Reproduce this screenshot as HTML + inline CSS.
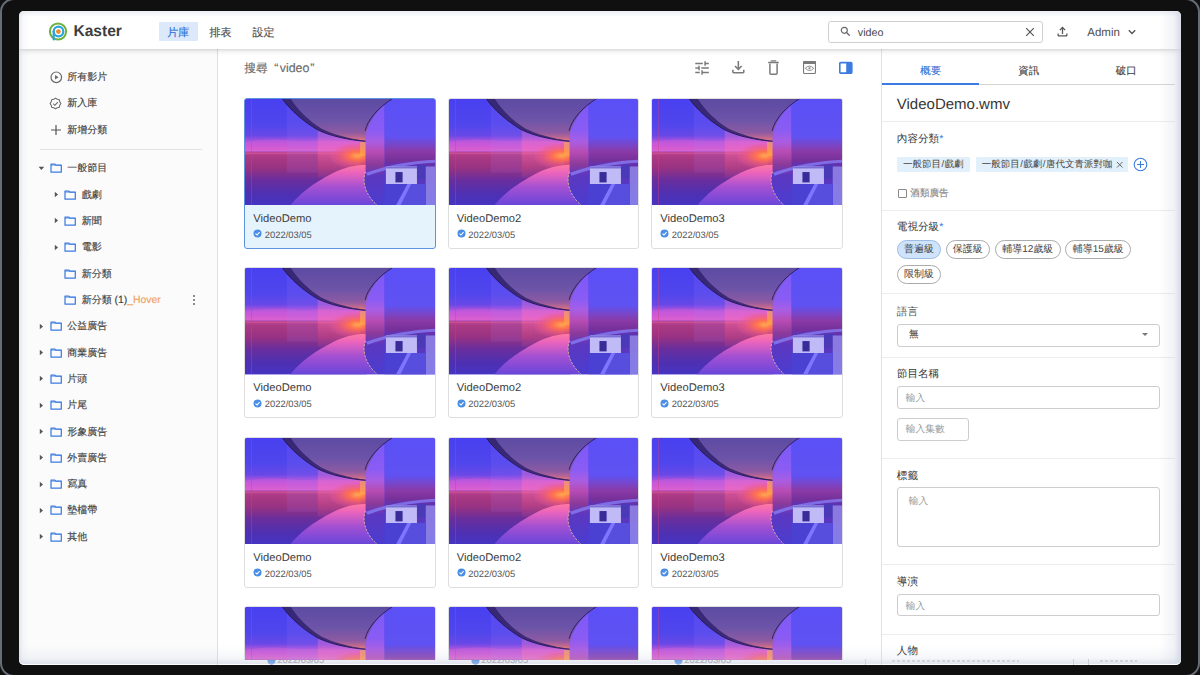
<!DOCTYPE html>
<html><head><meta charset="utf-8">
<style>
*{box-sizing:border-box;margin:0;padding:0}
html,body{width:1200px;height:675px;overflow:hidden;background:#111;font-family:"Liberation Sans",sans-serif;color:#444;text-rendering:geometricPrecision}
#frame{position:absolute;left:0;top:-2px;width:1200px;height:679px;border:2.6px solid #676d78;border-radius:14px;background:#101010}
#screen{position:absolute;left:19.3px;top:11px;width:1162px;height:653.5px;border-radius:5px;overflow:hidden;background:#fff}
#app{position:absolute;left:-19px;top:-11px;width:1200px;height:675px}
.a{position:absolute;white-space:nowrap}
.t{position:absolute;white-space:nowrap;line-height:14px;-webkit-text-stroke-width:0.15px}
#vig{position:absolute;left:0;top:0;width:1162px;height:653px;border-radius:5px;pointer-events:none;
 background:linear-gradient(to right,rgba(200,206,222,.5),rgba(200,206,222,.12) 4px,rgba(200,206,222,0) 10px),linear-gradient(to left,rgba(200,206,222,.75),rgba(200,206,222,.25) 7px,rgba(200,206,222,0) 22px),linear-gradient(to top,rgba(200,206,222,.55),rgba(200,206,222,.18) 6px,rgba(200,206,222,0) 18px),linear-gradient(to bottom,rgba(200,206,222,.35),rgba(200,206,222,0) 6px)}
.card{position:absolute;width:191.3px;height:151px;border:1px solid #dedede;border-radius:3px;background:#fff;overflow:hidden}
.card.sel{border-color:#5d92dc;background:#e5f3fd}
.card svg.th{position:absolute;left:-1px;top:-1px}
.ct{position:absolute;left:8px;top:113px;font-size:11.2px;line-height:14px;color:#3c3c3c}
.cd{position:absolute;left:19.5px;top:130px;font-size:9.4px;line-height:12px;color:#555}
.ck{position:absolute;left:7.8px;top:130.8px}
.lbl{position:absolute;font-size:10.6px;line-height:14px;color:#333;font-weight:500}
.inp{position:absolute;border:1px solid #cdcdcd;border-radius:3px;background:#fff}
.ph{position:absolute;font-size:9.8px;line-height:12px;color:#9a9a9a}
.div{position:absolute;left:882px;width:293px;height:1px;background:#ececec}
.pill{position:absolute;height:19px;border:1px solid #ababab;border-radius:10px;font-size:10px;line-height:17.5px;color:#444;text-align:center}
.chip{position:absolute;height:15.5px;background:#e2f0fc;border-radius:1px;font-size:9.5px;line-height:15.5px;color:#444;padding-left:6px}
</style></head><body>
<div id="frame"></div>
<div id="screen"><div id="app">

<svg width="0" height="0" style="position:absolute">
<defs>
 <linearGradient id="gskyL" x1="0" y1="0" x2="0" y2="1">
  <stop offset="0" stop-color="#4840f0"/><stop offset="0.5" stop-color="#5046ec"/><stop offset="0.7" stop-color="#6848e6"/><stop offset="0.78" stop-color="#9c50e0"/><stop offset="0.88" stop-color="#cc58d8"/><stop offset="1" stop-color="#dc62cc"/>
 </linearGradient>
 <linearGradient id="gcity" x1="0" y1="0" x2="0" y2="1">
  <stop offset="0" stop-color="#c04a94"/><stop offset="0.08" stop-color="#ac3a84"/><stop offset="0.3" stop-color="#983282"/><stop offset="0.52" stop-color="#6a2e9c"/><stop offset="0.78" stop-color="#4e30b2"/><stop offset="1" stop-color="#4634c2"/>
 </linearGradient>
 <linearGradient id="gskyR" x1="0" y1="0" x2="0" y2="1">
  <stop offset="0" stop-color="#5a50f6"/><stop offset="0.36" stop-color="#6052f2"/><stop offset="0.42" stop-color="#7448d0"/><stop offset="0.5" stop-color="#8a3aa6"/><stop offset="0.58" stop-color="#76309a"/><stop offset="0.62" stop-color="#6232b0"/><stop offset="1" stop-color="#4a3ed6"/>
 </linearGradient>
 <linearGradient id="gglass" x1="0" y1="0" x2="0" y2="1">
  <stop offset="0" stop-color="#7a58f8"/><stop offset="0.3" stop-color="#8a5cf4"/><stop offset="0.4" stop-color="#a85ee4"/><stop offset="0.5" stop-color="#b84cb4"/><stop offset="0.62" stop-color="#8a3a9a"/><stop offset="0.72" stop-color="#5c38c0"/><stop offset="1" stop-color="#4a3cd0"/>
 </linearGradient>
 <linearGradient id="gceil" x1="0" y1="0" x2="0" y2="1">
  <stop offset="0" stop-color="#5c4aa2"/><stop offset="0.5" stop-color="#6c54a8"/><stop offset="0.8" stop-color="#8e5aa2"/><stop offset="0.92" stop-color="#c06890"/><stop offset="1" stop-color="#f08070"/>
 </linearGradient>
 <linearGradient id="gfloor" x1="0" y1="0" x2="0" y2="1">
  <stop offset="0" stop-color="#ff7aa0"/><stop offset="0.2" stop-color="#ec64bc"/><stop offset="0.55" stop-color="#a450d2"/><stop offset="1" stop-color="#6846da"/>
 </linearGradient>
 <radialGradient id="gsun" cx="0.5" cy="0.5" r="0.5">
  <stop offset="0" stop-color="#ffa850"/><stop offset="0.3" stop-color="#ff7050"/><stop offset="0.7" stop-color="#f05a80" stop-opacity="0.5"/><stop offset="1" stop-color="#f060a0" stop-opacity="0"/>
 </radialGradient>
 <linearGradient id="gpanel" x1="0" y1="0" x2="0" y2="1">
  <stop offset="0" stop-color="#ff80d0" stop-opacity="0"/><stop offset="0.45" stop-color="#ff80d0" stop-opacity="0.35"/><stop offset="0.7" stop-color="#ff70b0" stop-opacity="0.4"/><stop offset="1" stop-color="#ff6080" stop-opacity="0.1"/>
 </linearGradient>
 <symbol id="thumb" viewBox="0 0 192 108">
  <rect width="192" height="108" fill="#4b3ae8"/>
  <rect x="0" y="0" width="123" height="54" fill="url(#gskyL)"/>
  <rect x="0" y="54" width="123" height="54" fill="url(#gcity)"/>
  <path d="M0 44 C15 42 30 41 45 42.5 C60 44 75 42 90 43 L122 44 L122 47 L0 47 Z" fill="#d860d8" opacity=".35"/>
  <rect x="0" y="55" width="123" height="1.2" fill="#e05aa0" opacity=".5"/>
  <rect x="43" y="0" width="31" height="75" fill="#b080ff" opacity=".12"/>
  <rect x="74" y="0" width="12" height="80" fill="url(#gpanel)"/>
  <rect x="86" y="0" width="31" height="80" fill="url(#gpanel)"/>
  <ellipse cx="114" cy="58" rx="30" ry="14" fill="url(#gsun)"/>
  <rect x="116.5" y="44" width="6" height="14" fill="#ffb048" opacity=".6"/>
  <rect x="141" y="0" width="51" height="108" fill="url(#gskyR)"/>
  <path d="M122 0 H141 V108 H134 C124 98 118 84 122 74 Z" fill="url(#gglass)"/>
  <path d="M38 0 C46 12 60 24 74 32 C86 38 104 42 122 43.5 C121 32 130 12 150 0 Z" fill="url(#gceil)"/>
  <path d="M37.6 0 C46 12 60 24 74 32 C86 38 104 42 122 43.5 L122 43 C104 41 88 36 78 31 C64 22 54 12 46.4 0 Z" fill="#30226e" opacity=".85"/>
  <path d="M38 0 C46 12 60 24 74 32 C86 38 104 42 122 43.5" stroke="#2a1860" stroke-width="1" fill="none"/>
  <path d="M121.6 33 C124 22 134 10 150 0" stroke="#2a1860" stroke-width="0.9" fill="none"/>
  <path d="M46.4 108 C54 98 68 86 90 75 C100 70 110 67.5 122 67 L122 74 C118 84 122 98 134 108 Z" fill="url(#gfloor)"/>
  <path d="M122 74 C118 84 122 98 134 108" stroke="#e8c898" stroke-width="0.9" stroke-dasharray="2.4 1.3" fill="none" opacity=".85"/>
  <path d="M122.5 75 C145 67 170 63 192 62 L192 65 C170 66 146 70 124 78 Z" fill="#8a84ff" opacity=".7"/>
  <rect x="142.4" y="68.8" width="31.2" height="17.6" fill="#c0baf6"/>
  <rect x="142.4" y="68.8" width="31.2" height="2" fill="#7a70d8"/>
  <rect x="152" y="74.4" width="7.2" height="10.4" fill="#3a2c98"/>
  <rect x="173.6" y="67" width="9" height="14" fill="#4a3ab8"/>
  <rect x="182.4" y="68.8" width="9.6" height="39.2" fill="#9a92ee" opacity=".75"/>
  <path d="M141 86.4 L182.4 86.4 L182.4 108 L141 108 Z" fill="#4a40d2"/>
  <path d="M164 86.4 L168 86.4 L157 108 L152.5 108 Z" fill="#7e76ff"/>
  <path d="M168 86.4 L182.4 86.4 L182.4 108 L157 108 Z" fill="#6058e6" opacity=".6"/>
  <rect x="7.2" y="0" width="0.7" height="108" fill="#d04080" opacity=".6"/>
 </symbol>
</defs></svg>

<div class="a" style="left:19px;top:49px;width:199px;height:626px;background:#fbfbfc;border-right:1px solid #e0e0e0"></div>
<div class="a" style="left:881px;top:49px;width:300px;height:626px;background:#fff;border-left:1px solid #e2e2e2"></div>
<svg class="a" style="left:49.4px;top:70.8px" width="13" height="13" viewBox="0 0 13 13"><circle cx="6.3" cy="6.3" r="5.3" fill="none" stroke="#6a6a6a" stroke-width="1.2"/><path d="M5 4.1 L8.6 6.3 L5 8.5 Z" fill="#6a6a6a"/></svg>
<div class="t" style="left:67px;top:71.3px;font-size:10px;color:#3f3f3f">所有影片</div>
<svg class="a" style="left:48.6px;top:97px" width="13" height="13" viewBox="0 0 13 13"><path d="M6.50 1.10 L8.26 2.25 L10.32 2.68 L10.75 4.74 L11.90 6.50 L10.75 8.26 L10.32 10.32 L8.26 10.75 L6.50 11.90 L4.74 10.75 L2.68 10.32 L2.25 8.26 L1.10 6.50 L2.25 4.74 L2.68 2.68 L4.74 2.25 Z" fill="none" stroke="#6a6a6a" stroke-width="1.1" stroke-linejoin="round"/><path d="M4.2 6.7 L5.9 8.3 L8.9 5.1" fill="none" stroke="#6a6a6a" stroke-width="1.1"/></svg>
<div class="t" style="left:67px;top:97.3px;font-size:10px;color:#3f3f3f">新入庫</div>
<svg class="a" style="left:50px;top:124px" width="12" height="12" viewBox="0 0 12 12"><path d="M6 1 V11 M1 6 H11" stroke="#555" stroke-width="1.2"/></svg>
<div class="t" style="left:67px;top:124px;font-size:10px;color:#3f3f3f">新增分類</div>
<div class="a" style="left:40px;top:149px;width:162px;height:1px;background:#e3e3e3"></div>
<svg class="a" style="left:38.2px;top:166.0px" width="7" height="5" viewBox="0 0 7 5"><path d="M0.6 0.8 H6.2 L3.4 4 Z" fill="#555"/></svg>
<svg class="a" style="left:49.5px;top:163.3px" width="13" height="10" viewBox="0 0 13 10"><path d="M1 1 H4.6 L5.8 2 H11.3 V9.2 H1 Z" fill="none" stroke="#3d7ce0" stroke-width="1.25" stroke-linejoin="round"/><path d="M1 2.3 H11.3" stroke="#3d7ce0" stroke-width="0.6"/></svg>
<div class="t" style="left:67px;top:162.3px;font-size:10px;color:#3f3f3f">一般節目</div>
<svg class="a" style="left:53.3px;top:191.12px" width="5" height="7" viewBox="0 0 5 7"><path d="M0.8 0.8 L4 3.5 L0.8 6.2 Z" fill="#555"/></svg>
<svg class="a" style="left:64.0px;top:189.62px" width="13" height="10" viewBox="0 0 13 10"><path d="M1 1 H4.6 L5.8 2 H11.3 V9.2 H1 Z" fill="none" stroke="#3d7ce0" stroke-width="1.25" stroke-linejoin="round"/><path d="M1 2.3 H11.3" stroke="#3d7ce0" stroke-width="0.6"/></svg>
<div class="t" style="left:81.5px;top:188.62px;font-size:10px;color:#3f3f3f">戲劇</div>
<svg class="a" style="left:53.3px;top:217.44px" width="5" height="7" viewBox="0 0 5 7"><path d="M0.8 0.8 L4 3.5 L0.8 6.2 Z" fill="#555"/></svg>
<svg class="a" style="left:64.0px;top:215.94px" width="13" height="10" viewBox="0 0 13 10"><path d="M1 1 H4.6 L5.8 2 H11.3 V9.2 H1 Z" fill="none" stroke="#3d7ce0" stroke-width="1.25" stroke-linejoin="round"/><path d="M1 2.3 H11.3" stroke="#3d7ce0" stroke-width="0.6"/></svg>
<div class="t" style="left:81.5px;top:214.94px;font-size:10px;color:#3f3f3f">新聞</div>
<svg class="a" style="left:53.3px;top:243.76000000000002px" width="5" height="7" viewBox="0 0 5 7"><path d="M0.8 0.8 L4 3.5 L0.8 6.2 Z" fill="#555"/></svg>
<svg class="a" style="left:64.0px;top:242.26000000000002px" width="13" height="10" viewBox="0 0 13 10"><path d="M1 1 H4.6 L5.8 2 H11.3 V9.2 H1 Z" fill="none" stroke="#3d7ce0" stroke-width="1.25" stroke-linejoin="round"/><path d="M1 2.3 H11.3" stroke="#3d7ce0" stroke-width="0.6"/></svg>
<div class="t" style="left:81.5px;top:241.26000000000002px;font-size:10px;color:#3f3f3f">電影</div>
<svg class="a" style="left:64.0px;top:268.58000000000004px" width="13" height="10" viewBox="0 0 13 10"><path d="M1 1 H4.6 L5.8 2 H11.3 V9.2 H1 Z" fill="none" stroke="#3d7ce0" stroke-width="1.25" stroke-linejoin="round"/><path d="M1 2.3 H11.3" stroke="#3d7ce0" stroke-width="0.6"/></svg>
<div class="t" style="left:81.5px;top:267.58000000000004px;font-size:10px;color:#3f3f3f">新分類</div>
<svg class="a" style="left:64.0px;top:294.9px" width="13" height="10" viewBox="0 0 13 10"><path d="M1 1 H4.6 L5.8 2 H11.3 V9.2 H1 Z" fill="none" stroke="#3d7ce0" stroke-width="1.25" stroke-linejoin="round"/><path d="M1 2.3 H11.3" stroke="#3d7ce0" stroke-width="0.6"/></svg>
<div class="t" style="left:81.5px;top:293.9px;font-size:10px;color:#3f3f3f">新分類 <span style="font-size:10.4px">(1)</span><span style="color:#f0a060;font-size:10.4px">_Hover</span></div>
<svg class="a" style="left:38.8px;top:322.72px" width="5" height="7" viewBox="0 0 5 7"><path d="M0.8 0.8 L4 3.5 L0.8 6.2 Z" fill="#555"/></svg>
<svg class="a" style="left:49.5px;top:321.22px" width="13" height="10" viewBox="0 0 13 10"><path d="M1 1 H4.6 L5.8 2 H11.3 V9.2 H1 Z" fill="none" stroke="#3d7ce0" stroke-width="1.25" stroke-linejoin="round"/><path d="M1 2.3 H11.3" stroke="#3d7ce0" stroke-width="0.6"/></svg>
<div class="t" style="left:67px;top:320.22px;font-size:10px;color:#3f3f3f">公益廣告</div>
<svg class="a" style="left:38.8px;top:349.04px" width="5" height="7" viewBox="0 0 5 7"><path d="M0.8 0.8 L4 3.5 L0.8 6.2 Z" fill="#555"/></svg>
<svg class="a" style="left:49.5px;top:347.54px" width="13" height="10" viewBox="0 0 13 10"><path d="M1 1 H4.6 L5.8 2 H11.3 V9.2 H1 Z" fill="none" stroke="#3d7ce0" stroke-width="1.25" stroke-linejoin="round"/><path d="M1 2.3 H11.3" stroke="#3d7ce0" stroke-width="0.6"/></svg>
<div class="t" style="left:67px;top:346.54px;font-size:10px;color:#3f3f3f">商業廣告</div>
<svg class="a" style="left:38.8px;top:375.36px" width="5" height="7" viewBox="0 0 5 7"><path d="M0.8 0.8 L4 3.5 L0.8 6.2 Z" fill="#555"/></svg>
<svg class="a" style="left:49.5px;top:373.86px" width="13" height="10" viewBox="0 0 13 10"><path d="M1 1 H4.6 L5.8 2 H11.3 V9.2 H1 Z" fill="none" stroke="#3d7ce0" stroke-width="1.25" stroke-linejoin="round"/><path d="M1 2.3 H11.3" stroke="#3d7ce0" stroke-width="0.6"/></svg>
<div class="t" style="left:67px;top:372.86px;font-size:10px;color:#3f3f3f">片頭</div>
<svg class="a" style="left:38.8px;top:401.68px" width="5" height="7" viewBox="0 0 5 7"><path d="M0.8 0.8 L4 3.5 L0.8 6.2 Z" fill="#555"/></svg>
<svg class="a" style="left:49.5px;top:400.18px" width="13" height="10" viewBox="0 0 13 10"><path d="M1 1 H4.6 L5.8 2 H11.3 V9.2 H1 Z" fill="none" stroke="#3d7ce0" stroke-width="1.25" stroke-linejoin="round"/><path d="M1 2.3 H11.3" stroke="#3d7ce0" stroke-width="0.6"/></svg>
<div class="t" style="left:67px;top:399.18px;font-size:10px;color:#3f3f3f">片尾</div>
<svg class="a" style="left:38.8px;top:428.0px" width="5" height="7" viewBox="0 0 5 7"><path d="M0.8 0.8 L4 3.5 L0.8 6.2 Z" fill="#555"/></svg>
<svg class="a" style="left:49.5px;top:426.5px" width="13" height="10" viewBox="0 0 13 10"><path d="M1 1 H4.6 L5.8 2 H11.3 V9.2 H1 Z" fill="none" stroke="#3d7ce0" stroke-width="1.25" stroke-linejoin="round"/><path d="M1 2.3 H11.3" stroke="#3d7ce0" stroke-width="0.6"/></svg>
<div class="t" style="left:67px;top:425.5px;font-size:10px;color:#3f3f3f">形象廣告</div>
<svg class="a" style="left:38.8px;top:454.32px" width="5" height="7" viewBox="0 0 5 7"><path d="M0.8 0.8 L4 3.5 L0.8 6.2 Z" fill="#555"/></svg>
<svg class="a" style="left:49.5px;top:452.82px" width="13" height="10" viewBox="0 0 13 10"><path d="M1 1 H4.6 L5.8 2 H11.3 V9.2 H1 Z" fill="none" stroke="#3d7ce0" stroke-width="1.25" stroke-linejoin="round"/><path d="M1 2.3 H11.3" stroke="#3d7ce0" stroke-width="0.6"/></svg>
<div class="t" style="left:67px;top:451.82px;font-size:10px;color:#3f3f3f">外賣廣告</div>
<svg class="a" style="left:38.8px;top:480.64000000000004px" width="5" height="7" viewBox="0 0 5 7"><path d="M0.8 0.8 L4 3.5 L0.8 6.2 Z" fill="#555"/></svg>
<svg class="a" style="left:49.5px;top:479.14000000000004px" width="13" height="10" viewBox="0 0 13 10"><path d="M1 1 H4.6 L5.8 2 H11.3 V9.2 H1 Z" fill="none" stroke="#3d7ce0" stroke-width="1.25" stroke-linejoin="round"/><path d="M1 2.3 H11.3" stroke="#3d7ce0" stroke-width="0.6"/></svg>
<div class="t" style="left:67px;top:478.14000000000004px;font-size:10px;color:#3f3f3f">寫真</div>
<svg class="a" style="left:38.8px;top:506.96000000000004px" width="5" height="7" viewBox="0 0 5 7"><path d="M0.8 0.8 L4 3.5 L0.8 6.2 Z" fill="#555"/></svg>
<svg class="a" style="left:49.5px;top:505.46000000000004px" width="13" height="10" viewBox="0 0 13 10"><path d="M1 1 H4.6 L5.8 2 H11.3 V9.2 H1 Z" fill="none" stroke="#3d7ce0" stroke-width="1.25" stroke-linejoin="round"/><path d="M1 2.3 H11.3" stroke="#3d7ce0" stroke-width="0.6"/></svg>
<div class="t" style="left:67px;top:504.46000000000004px;font-size:10px;color:#3f3f3f">墊檔帶</div>
<svg class="a" style="left:38.8px;top:533.28px" width="5" height="7" viewBox="0 0 5 7"><path d="M0.8 0.8 L4 3.5 L0.8 6.2 Z" fill="#555"/></svg>
<svg class="a" style="left:49.5px;top:531.78px" width="13" height="10" viewBox="0 0 13 10"><path d="M1 1 H4.6 L5.8 2 H11.3 V9.2 H1 Z" fill="none" stroke="#3d7ce0" stroke-width="1.25" stroke-linejoin="round"/><path d="M1 2.3 H11.3" stroke="#3d7ce0" stroke-width="0.6"/></svg>
<div class="t" style="left:67px;top:530.78px;font-size:10px;color:#3f3f3f">其他</div>
<svg class="a" style="left:192px;top:293.9px" width="4" height="12" viewBox="0 0 4 12"><circle cx="2" cy="2" r="1" fill="#666"/><circle cx="2" cy="6" r="1" fill="#666"/><circle cx="2" cy="10" r="1" fill="#666"/></svg>
<div class="t" style="left:244px;top:60px;font-size:12.4px;line-height:16px;color:#6a6a6a"><span style="font-size:11.8px">搜尋</span> <span style="margin-left:3px">“</span><span style="margin-left:1.3px">video</span><span style="margin-left:0.8px">”</span></div>
<svg class="a" style="left:692.9px;top:58.9px" width="18.1" height="18.1" viewBox="0 0 24 24"><path fill="#7a7a7a" d="M3 17v2h6v-2H3zM3 5v2h10V5H3zm10 16v-2h8v-2h-8v-2h-2v6h2zM7 9v2H3v2h4v2h2V9H7zm14 4v-2H11v2h10zm-6-4h2V7h4V5h-4V3h-2v6z"/></svg>
<svg class="a" style="left:728.3px;top:58.3px" width="18.7" height="18.7" viewBox="0 -960 960 960"><path fill="#7a7a7a" d="M480-320 280-520l56-58 104 104v-326h80v326l104-104 56 58-200 200ZM240-160q-33 0-56.5-23.5T160-240v-120h80v120h480v-120h80v120q0 33-23.5 56.5T720-160H240Z"/></svg>
<svg class="a" style="left:766px;top:59px" width="15" height="17" viewBox="0 0 15 17"><path d="M2.2 3.5 H12.8" stroke="#7a7a7a" stroke-width="1.5"/><path d="M5.3 2.6 V1.9 H9.7 V2.6" fill="none" stroke="#7a7a7a" stroke-width="1.1"/><path d="M3.9 4.5 V14.2 Q3.9 15.2 4.9 15.2 H10.1 Q11.1 15.2 11.1 14.2 V4.5" fill="none" stroke="#7a7a7a" stroke-width="1.5"/></svg>
<svg class="a" style="left:802px;top:60px" width="15" height="15" viewBox="0 0 15 15"><rect x="1.55" y="1.55" width="11.9" height="11.9" rx="1" fill="none" stroke="#7a7a7a" stroke-width="1.1"/><rect x="1" y="1" width="13" height="3" rx="1" fill="#7a7a7a"/><path d="M3.3 8.3 Q7.5 3.9 11.7 8.3 Q7.5 12.7 3.3 8.3 Z" fill="none" stroke="#7a7a7a" stroke-width="0.9"/><circle cx="7.5" cy="8.3" r="1" fill="#7a7a7a"/></svg>
<svg class="a" style="left:838px;top:61px" width="15" height="14" viewBox="0 0 15 14"><rect x="1.8" y="1.6" width="12" height="10.5" rx="0.8" fill="none" stroke="#3d7be0" stroke-width="1.6"/><rect x="8.2" y="1" width="5.8" height="11.7" rx="0.6" fill="#3d7be0"/></svg>
<div class="card sel" style="left:244px;top:97.6px"><svg class="th" width="191.3" height="107.5" viewBox="0 0 192 108" preserveAspectRatio="none"><use href="#thumb"/></svg><div class="ct">VideoDemo</div><svg class="ck" width="9" height="9" viewBox="0 0 9 9"><circle cx="4.5" cy="4.5" r="4" fill="#4a8ee6"/><path d="M2.5 4.6 L4 6 L6.6 3.2" fill="none" stroke="#fff" stroke-width="1.1"/></svg><div class="cd">2022/03/05</div></div>
<div class="card" style="left:447.5px;top:97.6px"><svg class="th" width="191.3" height="107.5" viewBox="0 0 192 108" preserveAspectRatio="none"><use href="#thumb"/></svg><div class="ct">VideoDemo2</div><svg class="ck" width="9" height="9" viewBox="0 0 9 9"><circle cx="4.5" cy="4.5" r="4" fill="#4a8ee6"/><path d="M2.5 4.6 L4 6 L6.6 3.2" fill="none" stroke="#fff" stroke-width="1.1"/></svg><div class="cd">2022/03/05</div></div>
<div class="card" style="left:651px;top:97.6px"><svg class="th" width="191.3" height="107.5" viewBox="0 0 192 108" preserveAspectRatio="none"><use href="#thumb"/></svg><div class="ct">VideoDemo3</div><svg class="ck" width="9" height="9" viewBox="0 0 9 9"><circle cx="4.5" cy="4.5" r="4" fill="#4a8ee6"/><path d="M2.5 4.6 L4 6 L6.6 3.2" fill="none" stroke="#fff" stroke-width="1.1"/></svg><div class="cd">2022/03/05</div></div>
<div class="card" style="left:244px;top:267.1px"><svg class="th" width="191.3" height="107.5" viewBox="0 0 192 108" preserveAspectRatio="none"><use href="#thumb"/></svg><div class="ct">VideoDemo</div><svg class="ck" width="9" height="9" viewBox="0 0 9 9"><circle cx="4.5" cy="4.5" r="4" fill="#4a8ee6"/><path d="M2.5 4.6 L4 6 L6.6 3.2" fill="none" stroke="#fff" stroke-width="1.1"/></svg><div class="cd">2022/03/05</div></div>
<div class="card" style="left:447.5px;top:267.1px"><svg class="th" width="191.3" height="107.5" viewBox="0 0 192 108" preserveAspectRatio="none"><use href="#thumb"/></svg><div class="ct">VideoDemo2</div><svg class="ck" width="9" height="9" viewBox="0 0 9 9"><circle cx="4.5" cy="4.5" r="4" fill="#4a8ee6"/><path d="M2.5 4.6 L4 6 L6.6 3.2" fill="none" stroke="#fff" stroke-width="1.1"/></svg><div class="cd">2022/03/05</div></div>
<div class="card" style="left:651px;top:267.1px"><svg class="th" width="191.3" height="107.5" viewBox="0 0 192 108" preserveAspectRatio="none"><use href="#thumb"/></svg><div class="ct">VideoDemo3</div><svg class="ck" width="9" height="9" viewBox="0 0 9 9"><circle cx="4.5" cy="4.5" r="4" fill="#4a8ee6"/><path d="M2.5 4.6 L4 6 L6.6 3.2" fill="none" stroke="#fff" stroke-width="1.1"/></svg><div class="cd">2022/03/05</div></div>
<div class="card" style="left:244px;top:436.6px"><svg class="th" width="191.3" height="107.5" viewBox="0 0 192 108" preserveAspectRatio="none"><use href="#thumb"/></svg><div class="ct">VideoDemo</div><svg class="ck" width="9" height="9" viewBox="0 0 9 9"><circle cx="4.5" cy="4.5" r="4" fill="#4a8ee6"/><path d="M2.5 4.6 L4 6 L6.6 3.2" fill="none" stroke="#fff" stroke-width="1.1"/></svg><div class="cd">2022/03/05</div></div>
<div class="card" style="left:447.5px;top:436.6px"><svg class="th" width="191.3" height="107.5" viewBox="0 0 192 108" preserveAspectRatio="none"><use href="#thumb"/></svg><div class="ct">VideoDemo2</div><svg class="ck" width="9" height="9" viewBox="0 0 9 9"><circle cx="4.5" cy="4.5" r="4" fill="#4a8ee6"/><path d="M2.5 4.6 L4 6 L6.6 3.2" fill="none" stroke="#fff" stroke-width="1.1"/></svg><div class="cd">2022/03/05</div></div>
<div class="card" style="left:651px;top:436.6px"><svg class="th" width="191.3" height="107.5" viewBox="0 0 192 108" preserveAspectRatio="none"><use href="#thumb"/></svg><div class="ct">VideoDemo3</div><svg class="ck" width="9" height="9" viewBox="0 0 9 9"><circle cx="4.5" cy="4.5" r="4" fill="#4a8ee6"/><path d="M2.5 4.6 L4 6 L6.6 3.2" fill="none" stroke="#fff" stroke-width="1.1"/></svg><div class="cd">2022/03/05</div></div>
<div class="card" style="left:244px;top:606.1px"><svg class="th" width="191.3" height="107.5" viewBox="0 0 192 108" preserveAspectRatio="none"><use href="#thumb"/></svg><div class="ct">VideoDemo</div><svg class="ck" width="9" height="9" viewBox="0 0 9 9"><circle cx="4.5" cy="4.5" r="4" fill="#4a8ee6"/><path d="M2.5 4.6 L4 6 L6.6 3.2" fill="none" stroke="#fff" stroke-width="1.1"/></svg><div class="cd">2022/03/05</div></div>
<div class="card" style="left:447.5px;top:606.1px"><svg class="th" width="191.3" height="107.5" viewBox="0 0 192 108" preserveAspectRatio="none"><use href="#thumb"/></svg><div class="ct">VideoDemo2</div><svg class="ck" width="9" height="9" viewBox="0 0 9 9"><circle cx="4.5" cy="4.5" r="4" fill="#4a8ee6"/><path d="M2.5 4.6 L4 6 L6.6 3.2" fill="none" stroke="#fff" stroke-width="1.1"/></svg><div class="cd">2022/03/05</div></div>
<div class="card" style="left:651px;top:606.1px"><svg class="th" width="191.3" height="107.5" viewBox="0 0 192 108" preserveAspectRatio="none"><use href="#thumb"/></svg><div class="ct">VideoDemo3</div><svg class="ck" width="9" height="9" viewBox="0 0 9 9"><circle cx="4.5" cy="4.5" r="4" fill="#4a8ee6"/><path d="M2.5 4.6 L4 6 L6.6 3.2" fill="none" stroke="#fff" stroke-width="1.1"/></svg><div class="cd">2022/03/05</div></div>
<div class="a" style="left:19px;top:11px;width:1162px;height:38.3px;background:#fff;box-shadow:0 1px 6px rgba(0,0,0,.16),0 1px 2px rgba(0,0,0,.06)"></div>
<svg class="a" style="left:48px;top:21px" width="20" height="21" viewBox="0 0 20 21">
    <circle cx="10" cy="10.5" r="8.1" fill="none" stroke="#6fb13f" stroke-width="2"/>
    <circle cx="10.5" cy="10.5" r="4.8" fill="none" stroke="#2ba6dc" stroke-width="2.2"/>
    <path d="M5.7 10.5 L5.7 18.5" stroke="#2ba6dc" stroke-width="2.2" stroke-linecap="round"/>
    <circle cx="10.4" cy="10.6" r="2.4" fill="#f28a2e"/></svg>
<div class="a" style="left:73.1px;top:22.2px;font-size:15.6px;font-weight:bold;color:#3d3d3d;line-height:20px">Kaster</div>
<div class="a" style="left:159px;top:22px;width:39px;height:19px;background:#dce9fb;border-radius:1px"></div>
<div class="t" style="left:167px;top:25.7px;font-size:11px;line-height:15px;color:#2c6fd8">片庫</div>
<div class="t" style="left:209.3px;top:25.7px;font-size:11px;line-height:15px;color:#4a4a4a">排表</div>
<div class="t" style="left:252.3px;top:25.7px;font-size:11px;line-height:15px;color:#4a4a4a">設定</div>
<div class="a" style="left:828px;top:21px;width:215px;height:22px;border:1px solid #cfcfcf;border-radius:3px;background:#fff"></div>
<svg class="a" style="left:840px;top:26px" width="11" height="11" viewBox="0 0 11 11"><circle cx="4.3" cy="4.3" r="3" fill="none" stroke="#666" stroke-width="1.15"/><path d="M6.5 6.5 L9.3 9.3" stroke="#666" stroke-width="1.3" stroke-linecap="round"/></svg>
<div class="t" style="left:857.5px;top:25.8px;font-size:10.7px;line-height:14px;color:#444;-webkit-text-stroke-width:0">video</div>
<svg class="a" style="left:1025px;top:27px" width="10" height="10" viewBox="0 0 10 10"><path d="M1.2 1.2 L8.8 8.8 M8.8 1.2 L1.2 8.8" stroke="#555" stroke-width="1.2"/></svg>
<svg class="a" style="left:1054.5px;top:24.4px" width="15" height="15" viewBox="0 -960 960 960"><path fill="#555" d="M440-320v-326L336-542l-56-58 200-200 200 200-56 58-104-104v326h-80ZM240-160q-33 0-56.5-23.5T160-240v-120h80v120h480v-120h80v120q0 33-23.5 56.5T720-160H240Z"/></svg>
<div class="t" style="left:1087px;top:25.6px;font-size:11.5px;line-height:15px;color:#505050;-webkit-text-stroke-width:0">Admin</div>
<svg class="a" style="left:1127px;top:27.7px" width="10" height="8" viewBox="0 0 10 8"><path d="M1.8 2.2 L5 5.4 L8.2 2.2" fill="none" stroke="#555" stroke-width="1.4"/></svg>
<div class="t" style="left:920px;top:65px;font-size:10.4px;color:#2f6fd6">概要</div>
<div class="t" style="left:1018px;top:65px;font-size:10.4px;color:#444">資訊</div>
<div class="t" style="left:1115.5px;top:65px;font-size:10.4px;color:#444">破口</div>
<div class="a" style="left:882px;top:83.5px;width:293px;height:1.5px;background:#d4d4d4"></div>
<div class="a" style="left:882px;top:83px;width:97px;height:2px;background:#3b7be0"></div>
<div class="t" style="left:896.5px;top:94.8px;font-size:15px;line-height:19px;color:#363636;-webkit-text-stroke-width:0">VideoDemo.wmv</div>
<div class="div" style="top:121px"></div>
<div class="lbl" style="left:896.5px;top:131.6px">內容分類<span style="color:#3b7be0">*</span></div>
<div class="chip" style="left:896.6px;top:156.7px;width:73px">一般節目<span style="margin:0 0.5px">/</span>戲劇</div>
<div class="chip" style="left:975.4px;top:156.7px;width:152.4px">一般節目<span style="margin:0 0.5px">/</span>戲劇<span style="margin:0 0.5px">/</span>唐代文青派對咖</div>
<svg class="a" style="left:1114.5px;top:160px" width="9" height="9" viewBox="0 0 9 9"><path d="M2 2 L7.5 7.5 M7.5 2 L2 7.5" stroke="#666" stroke-width="1"/></svg>
<svg class="a" style="left:1133px;top:157px" width="15" height="15" viewBox="0 0 15 15"><circle cx="7.5" cy="7.5" r="6.3" fill="none" stroke="#3b7be0" stroke-width="1.1"/><path d="M7.5 4 V11 M4 7.5 H11" stroke="#3b7be0" stroke-width="1.1"/></svg>
<div class="a" style="left:897.6px;top:189px;width:9px;height:9px;border:1px solid #888;border-radius:1px"></div>
<div class="t" style="left:910px;top:186.6px;font-size:9.6px;color:#888">酒類廣告</div>
<div class="div" style="top:209.6px"></div>
<div class="lbl" style="left:896.5px;top:220.1px">電視分級<span style="color:#3b7be0">*</span></div>
<div class="pill" style="left:896.6px;top:240px;width:44px;background:#cfe3fb;border-color:#9cbce6;">普遍級</div>
<div class="pill" style="left:945.4px;top:240px;width:44.2px;">保護級</div>
<div class="pill" style="left:994.5px;top:240px;width:66px;">輔導12歲級</div>
<div class="pill" style="left:1065px;top:240px;width:66px;">輔導15歲級</div>
<div class="pill" style="left:896.6px;top:265px;width:44px;">限制級</div>
<div class="div" style="top:293px"></div>
<div class="lbl" style="left:896.5px;top:304.6px;color:#555;font-weight:400">語言</div>
<div class="inp" style="left:896.6px;top:324px;width:263px;height:22.5px"></div>
<div class="t" style="left:908.7px;top:328px;font-size:9.6px;color:#444">無</div>
<svg class="a" style="left:1141px;top:332px" width="8" height="5" viewBox="0 0 8 5"><path d="M1 1 H7 L4 4 Z" fill="#777"/></svg>
<div class="div" style="top:357px"></div>
<div class="lbl" style="left:896.5px;top:367px">節目名稱</div>
<div class="inp" style="left:896.6px;top:386.2px;width:263px;height:22.5px"></div>
<div class="ph" style="left:905.4px;top:392.6px">輸入</div>
<div class="inp" style="left:896.6px;top:418px;width:72px;height:22.5px"></div>
<div class="ph" style="left:905.4px;top:424.4px">輸入集數</div>
<div class="div" style="top:458px"></div>
<div class="lbl" style="left:896.5px;top:469.1px">標籤</div>
<div class="inp" style="left:896.6px;top:487.2px;width:263px;height:60px"></div>
<div class="ph" style="left:908.5px;top:496px">輸入</div>
<div class="div" style="top:564px"></div>
<div class="lbl" style="left:896.5px;top:575px">導演</div>
<div class="inp" style="left:896.6px;top:594.3px;width:263px;height:22px"></div>
<div class="ph" style="left:905.4px;top:600.5px">輸入</div>
<div class="div" style="top:634.3px"></div>
<div class="lbl" style="left:896.5px;top:644px">人物</div>
<div class="a" style="left:218px;top:660px;width:663px;height:10px;background:#fff"></div>
<div class="a" style="left:217px;top:660px;width:1px;height:5px;background:#ddd"></div>
<div class="a" style="left:218px;top:660px;width:663px;height:6px;overflow:hidden">
<svg class="a" style="left:49px;top:-4px" width="9" height="9" viewBox="0 0 9 9"><circle cx="4.5" cy="4.5" r="4" fill="#4a8ee6"/></svg>
<div class="t" style="left:59px;top:-7px;font-size:9.4px;color:#777;opacity:.75">2022/03/05</div>
<svg class="a" style="left:253px;top:-4px" width="9" height="9" viewBox="0 0 9 9"><circle cx="4.5" cy="4.5" r="4" fill="#4a8ee6"/></svg>
<div class="t" style="left:263px;top:-7px;font-size:9.4px;color:#777;opacity:.75">2022/03/05</div>
<svg class="a" style="left:456px;top:-4px" width="9" height="9" viewBox="0 0 9 9"><circle cx="4.5" cy="4.5" r="4" fill="#4a8ee6"/></svg>
<div class="t" style="left:466px;top:-7px;font-size:9.4px;color:#777;opacity:.75">2022/03/05</div>
</div>
<div class="a" style="left:892px;top:659.5px;width:127px;height:2px;background:repeating-linear-gradient(to right,#c8c8c8 0 3px,transparent 3px 5px);opacity:.7"></div>
<div class="a" style="left:1100px;top:659.5px;width:37px;height:2px;background:repeating-linear-gradient(to right,#c8c8c8 0 3px,transparent 3px 5px);opacity:.7"></div>
<div class="a" style="left:1072.5px;top:659px;width:1px;height:6px;background:#d0d0d0"></div>
<div class="a" style="left:1087.5px;top:659px;width:1px;height:6px;background:#d0d0d0"></div>
<div class="a" style="left:864.5px;top:659px;width:1px;height:6px;background:#d8d8d8"></div>
</div><div id="vig"></div></div>
</body></html>
